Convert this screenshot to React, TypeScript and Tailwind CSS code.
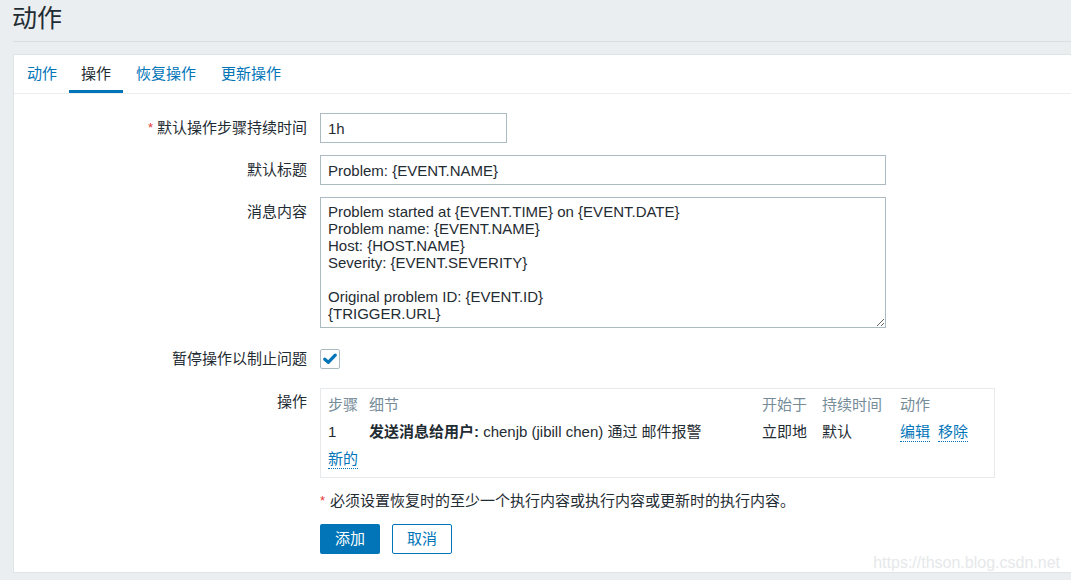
import React from "react";

const FONT = { fontFamily: '"Liberation Sans", "Noto Sans CJK SC", Arial, sans-serif' };

const message = `Problem started at {EVENT.TIME} on {EVENT.DATE}
Problem name: {EVENT.NAME}
Host: {HOST.NAME}
Severity: {EVENT.SEVERITY}

Original problem ID: {EVENT.ID}
{TRIGGER.URL}`;

const tabs = ["动作", "操作", "恢复操作", "更新操作"];

function Label({ text, required, className = "" }: { text: string; required?: boolean; className?: string }) {
  return (
    <div className={`w-[293px] shrink-0 text-right text-[15px] text-[#1f2c33] ${className}`}>
      {required && <span className="text-[#e33734] mr-[4px] text-[13px] align-top">*</span>}
      {text}
    </div>
  );
}

function DottedLink({ children }: { children: React.ReactNode }) {
  return (
    <span className="inline-block text-[#0275b8] leading-[18px] border-b border-dotted border-[#0275b8] cursor-pointer">
      {children}
    </span>
  );
}

export default function App() {
  return (
    <div className="relative w-[1071px] h-[580px] overflow-hidden bg-[#ebeef0]" style={FONT}>
      {/* header */}
      <div className="ml-[13px] h-[42px] border-b border-[#d9dee1]">
        <h1 className="text-[25px] leading-[36px] text-[#1f2c33] -ml-[1px]">动作</h1>
      </div>

      {/* panel */}
      <div className="ml-[13px] mt-[12px] h-[519px] bg-white border border-[#dfe4e7] border-r-0">
        {/* tabs */}
        <div className="flex pl-[1px] h-[39px] border-b border-[#ebeef0]">
          {tabs.map((t, i) => (
            <div
              key={t}
              className={`relative h-[38px] flex items-center px-[12px] text-[15px] ${
                i === 1 ? "text-[#1f2c33]" : "text-[#0275b8]"
              } ${i >= 2 ? "ml-[1px]" : ""}`}
            >
              {t}
              {i === 1 && <span className="absolute left-0 right-0 bottom-0 h-[3px] bg-[#0275b8]" />}
            </div>
          ))}
        </div>

        <div className="pt-[19px]">
          {/* row 1 */}
          <div className="flex items-center">
            <Label text="默认操作步骤持续时间" required className="leading-[30px]" />
            <input
              readOnly
              value="1h"
              className="ml-[13px] w-[187px] h-[30px] border border-[#acbbc2] px-[7px] text-[15px] text-[#1f2c33] outline-none"
            />
          </div>

          {/* row 2 */}
          <div className="flex items-center mt-[12px]">
            <Label text="默认标题" className="leading-[30px]" />
            <input
              readOnly
              value="Problem: {EVENT.NAME}"
              className="ml-[13px] w-[566px] h-[30px] border border-[#acbbc2] px-[7px] text-[15px] text-[#1f2c33] outline-none"
            />
          </div>

          {/* row 3 */}
          <div className="flex items-start mt-[12px]">
            <Label text="消息内容" className="leading-[30px]" />
            <textarea
              readOnly
              value={message}
              className="ml-[13px] w-[566px] h-[131px] border border-[#acbbc2] px-[7px] pt-[5px] text-[15px] leading-[17px] text-[#1f2c33] outline-none resize"
            />
          </div>

          {/* row 4 */}
          <div className="flex items-center mt-[21px]">
            <Label text="暂停操作以制止问题" className="leading-[20px]" />
            <div className="ml-[13px] w-[20px] h-[20px] border border-[#acbbc2] rounded-[2px] flex items-center justify-center">
              <svg width="14" height="12" viewBox="0 0 14 12">
                <path d="M1.8 6.2 L5.3 9.4 L12.2 2.2" fill="none" stroke="#0275b8" strokeWidth="3.2" strokeLinecap="round" strokeLinejoin="round" />
              </svg>
            </div>
          </div>

          {/* row 5 operations */}
          <div className="flex items-start mt-[19px]">
            <Label text="操作" className="leading-[28px]" />
            <div className="ml-[13px] w-[675px] h-[90px] border border-[#e6eaec] pl-[7px] pt-[3px] text-[15px]">
              <div className="grid grid-cols-[41px_393px_60px_78px_1fr] h-[27px] items-center text-[#768d99]">
                <span>步骤</span>
                <span>细节</span>
                <span>开始于</span>
                <span>持续时间</span>
                <span>动作</span>
              </div>
              <div className="grid grid-cols-[41px_393px_60px_78px_1fr] h-[27px] items-center text-[#1f2c33]">
                <span>1</span>
                <span className="whitespace-nowrap">
                  <b className="font-bold">发送消息给用户:</b> chenjb (jibill chen) 通过 邮件报警
                </span>
                <span>立即地</span>
                <span>默认</span>
                <span className="flex gap-[8px]">
                  <DottedLink>编辑</DottedLink>
                  <DottedLink>移除</DottedLink>
                </span>
              </div>
              <div className="h-[27px] flex items-center">
                <DottedLink>新的</DottedLink>
              </div>
            </div>
          </div>

          {/* note */}
          <div className="ml-[306px] mt-[13px] text-[15px] leading-[20px] text-[#1f2c33]">
            <span className="text-[#e33734] text-[13px] align-top mr-[5px]">*</span>
            必须设置恢复时的至少一个执行内容或执行内容或更新时的执行内容。
          </div>

          {/* buttons */}
          <div className="ml-[306px] mt-[13px] flex gap-[12px]">
            <button className="w-[60px] h-[30px] rounded-[2px] bg-[#0275b8] text-white text-[15px]">添加</button>
            <button className="w-[60px] h-[30px] rounded-[2px] border border-[#0275b8] bg-white text-[#0275b8] text-[15px]">取消</button>
          </div>
        </div>
      </div>

      {/* watermark */}
      <div className="absolute right-[11px] top-[551px] text-[16px] text-[#e6e8ea] pointer-events-none">
        https://thson.blog.csdn.net
      </div>
    </div>
  );
}
